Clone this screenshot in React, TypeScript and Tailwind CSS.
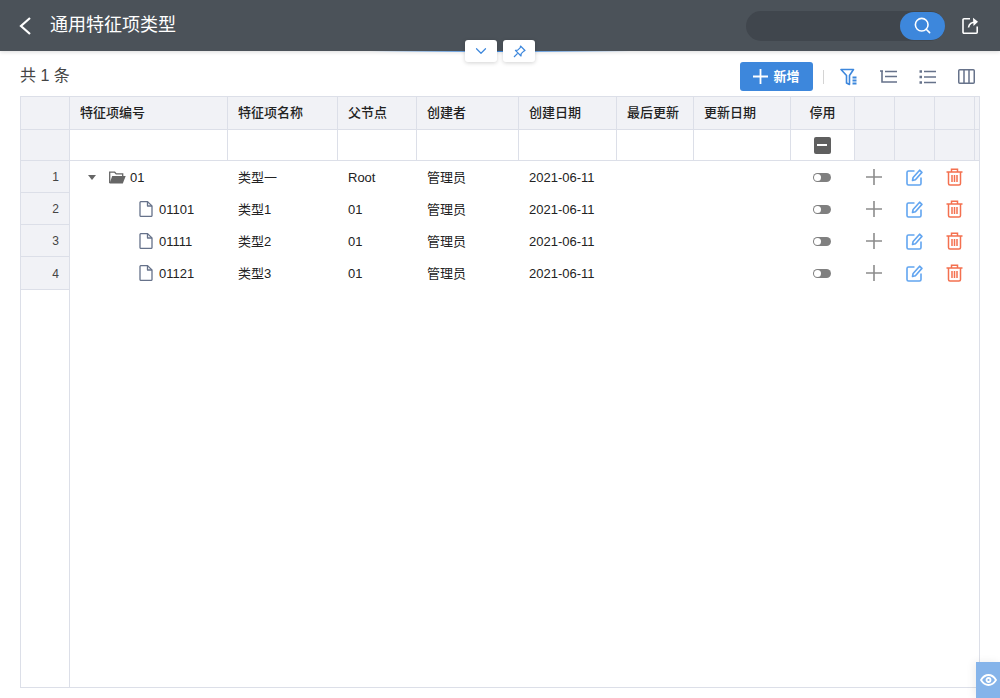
import { ChevronDown, Search } from 'lucide-react';

const widths = [49, 158, 110, 79, 102, 98, 77, 97, 64, 40, 40, 40, 4];
const gridCols = 'grid grid-cols-[49px_158px_110px_79px_102px_98px_77px_97px_64px_40px_40px_40px_4px]';

const headers = ['', '特征项编号', '特征项名称', '父节点', '创建者', '创建日期', '最后更新', '更新日期', '停用', '', '', '', ''];

const rows = [
  { no: 1, code: '01', name: '类型一', parent: 'Root', root: true },
  { no: 2, code: '01101', name: '类型1', parent: '01', root: false },
  { no: 3, code: '01111', name: '类型2', parent: '01', root: false },
  { no: 4, code: '01121', name: '类型3', parent: '01', root: false },
];

const FilterIcon = () => (
  <svg width="18" height="18" viewBox="0 0 18 18" fill="none" stroke="#3d87dc" strokeWidth="1.6">
    <path d="M1 1.5h12.5L9.5 7.5v9l-3-1.5V7.5z" strokeLinejoin="round" />
    <path d="M12.5 9.5h4M12.5 12.5h4M12.5 15.5h4" strokeWidth="1.8" />
  </svg>
);

const TreeListIcon = () => (
  <svg width="17" height="14" viewBox="0 0 17 14" fill="none" stroke="#66728a" strokeWidth="1.6">
    <path d="M0 1h3M5 1.5h12M2 1v11h3M5 6.5h12M5 12h12" />
  </svg>
);

const ListIcon = () => (
  <svg width="17" height="14" viewBox="0 0 17 14" fill="none" stroke="#66728a" strokeWidth="1.6">
    <path d="M5 1.5h12M5 7h12M5 12.5h12" />
    <path d="M0.5 1.5h2.5M0.5 7h2.5M0.5 12.5h2.5" strokeWidth="2.4" />
  </svg>
);

const ColumnsIcon = () => (
  <svg width="17" height="15" viewBox="0 0 17 15" fill="none" stroke="#66728a" strokeWidth="1.5">
    <rect x="0.75" y="0.75" width="15.5" height="13.5" rx="1" />
    <path d="M6 1v13M11 1v13" />
  </svg>
);

const ShareIcon = () => (
  <svg width="17" height="17" viewBox="0 0 17 17" fill="none" stroke="#fff" strokeWidth="1.6">
    <path d="M8 1.8H2a1 1 0 0 0-1 1v12.4a1 1 0 0 0 1 1h12.2a1 1 0 0 0 1-1V9.5" />
    <path d="M6.5 10.5C7 7 9.5 5 14 5" />
    <path d="M11 0.8L16 4.8L11.5 9z" fill="#fff" stroke="none" />
  </svg>
);

const PinIcon = () => (
  <svg width="13" height="13" viewBox="0 0 13 13" fill="none" stroke="#3d87dc" strokeWidth="1.2" strokeLinejoin="round">
    <path d="M7.5 1L12 5.5l-1.2.6-2.6 2.6-.2 2.3L2.4 5.4l2.3-.2 2.6-2.6z" />
    <path d="M4.6 8.4L1 12" />
  </svg>
);

const FolderOpenIcon = () => (
  <svg width="17" height="13" viewBox="0 0 17 13">
    <path d="M0.7 12V1.2h5l1.5 1.7h6.5V5" fill="none" stroke="#666" strokeWidth="1.3" />
    <path d="M3.2 5h13.5L13.8 12.6H0.5z" fill="#666" />
  </svg>
);

const FileIcon = () => (
  <svg width="14" height="16" viewBox="0 0 14 16" fill="none" stroke="#66728a" strokeWidth="1.3" strokeLinejoin="round">
    <path d="M1 1.6a1 1 0 0 1 1-1h6.5L13 5v9.4a1 1 0 0 1-1 1H2a1 1 0 0 1-1-1z" />
    <path d="M8.5 0.6V5H13" />
  </svg>
);

const EditIcon = () => (
  <svg width="17" height="17" viewBox="0 0 17 17" fill="none" stroke="#62a5f0" strokeWidth="1.6">
    <path d="M8.5 2H2.5a1.5 1.5 0 0 0-1.5 1.5v11A1.5 1.5 0 0 0 2.5 16h11a1.5 1.5 0 0 0 1.5-1.5V8.5" />
    <path d="M6.5 11.5l.6-3L13.6 1.2l2.3 2.2-6.5 7.4z" strokeLinejoin="round" />
  </svg>
);

const TrashIcon = () => (
  <svg width="17" height="18" viewBox="0 0 17 18" fill="none" stroke="#f4704f" strokeWidth="1.5">
    <path d="M0.5 4h16M5.5 4V1.2h6V4" />
    <path d="M2.5 4v11.5a1.5 1.5 0 0 0 1.5 1.5h9a1.5 1.5 0 0 0 1.5-1.5V4" />
    <path d="M6 7v7M8.5 7v7M11 7v7" />
  </svg>
);

const PlusIcon = () => (
  <svg width="16" height="16" viewBox="0 0 16 16" fill="none" stroke="#8c8c8c" strokeWidth="1.6">
    <path d="M0 8h16M8 0v16" />
  </svg>
);

const EyeIcon = () => (
  <svg width="17" height="12" viewBox="0 0 17 12" fill="none" stroke="#fff" strokeWidth="1.8">
    <path d="M1 6c2-3.300 4.500-5 7.500-5s5.500 1.700 7.500 5c-2 3.300-4.500 5-7.500 5S3 9.300 1 6z" />
    <circle cx="8.500" cy="6" r="2" />
  </svg>
);

export default function App() {
  return (
    <div className="relative w-[1000px] h-[698px] overflow-hidden bg-white font-['Liberation_Sans','Noto_Sans_CJK_SC',sans-serif]">
      {/* top bar */}
      <div className="h-[51px] bg-[#4b5259] flex items-center pl-[19px] pr-[21px] shadow-[0_1px_4px_rgba(0,0,0,0.15)]">
        <svg width="13" height="18" viewBox="0 0 13 18" fill="none" stroke="#fff" strokeWidth="2.200">
          <path d="M11 1L2 9l9 8" />
        </svg>
        <span className="ml-[18px] text-[18px] text-white">通用特征项类型</span>
        <div className="ml-auto flex items-center">
          <div className="w-[199px] h-[30px] mr-[17px] rounded-full bg-[#40464d] flex justify-end items-center">
            <div className="w-[45px] h-[28px] rounded-full bg-[#3d87dc] flex items-center justify-center">
              <Search size={19} strokeWidth={2} className="text-white" />
            </div>
          </div>
          <ShareIcon />
        </div>
      </div>

      {/* collapse and pin tabs */}
      <div className="absolute left-[370px] top-[51px] w-[260px] h-px bg-gradient-to-r from-transparent via-[#3d87dc] to-transparent" />
      <div className="absolute left-[465px] top-[40px] flex gap-[6px]">
        <div className="w-[32px] h-[22px] bg-white rounded-[3px] shadow-[0_1px_4px_rgba(0,0,0,0.18)] flex items-center justify-center">
          <ChevronDown size={18} strokeWidth={1.6} className="text-[#3d87dc]" />
        </div>
        <div className="w-[32px] h-[22px] bg-white rounded-[3px] shadow-[0_1px_4px_rgba(0,0,0,0.18)] flex items-center justify-center">
          <PinIcon />
        </div>
      </div>

      {/* toolbar */}
      <div className="h-[45px] pl-[20px] pr-[25px] pt-[6px] flex items-center">
        <span className="text-[16px] text-[#444] mb-[2px]">共 1 条</span>
        <div className="ml-auto flex items-center">
          <div className="w-[73px] h-[29px] rounded-[3px] bg-[#3d87dc] flex items-center justify-center gap-[5px] text-white">
            <svg width="15" height="15" viewBox="0 0 15 15" fill="none" stroke="#fff" strokeWidth="1.800">
              <path d="M0 7.500h15M7.500 0v15" />
            </svg>
            <span className="text-[13px] font-bold">新增</span>
          </div>
          <div className="ml-[10px] w-px h-[14px] bg-[#d4d4d4]" />
          <div className="ml-[16px] w-[18px] flex justify-center"><FilterIcon /></div>
          <div className="ml-[21px] w-[18px] flex justify-center"><TreeListIcon /></div>
          <div className="ml-[21px] w-[18px] flex justify-center"><ListIcon /></div>
          <div className="ml-[21px] w-[18px] flex justify-center"><ColumnsIcon /></div>
        </div>
      </div>

      {/* table */}
      <div className="relative mx-[20px] w-[960px] h-[592px] border border-[#dcdfe8] text-[13px] text-[#222]">
        <div className={`${gridCols} h-[33px] border-b border-[#dcdfe8] bg-[#f1f2f6]`}>
          {headers.map((h, i) => (
            <div
              key={i}
              className={`flex items-center font-medium whitespace-nowrap ${i === 8 ? 'justify-center' : 'px-[10px]'} ${i < 12 ? 'border-r border-[#dcdfe8]' : ''}`}
            >
              {h}
            </div>
          ))}
        </div>
        <div className={`${gridCols} h-[31px] border-b border-[#dcdfe8]`}>
          {widths.map((_, i) => (
            <div
              key={i}
              className={`flex items-center justify-center ${i < 12 ? 'border-r border-[#dcdfe8]' : ''} ${i === 0 || i > 8 ? 'bg-[#f1f2f6]' : ''}`}
            >
              {i === 8 && (
                <div className="w-[17px] h-[17px] mr-px rounded-[2px] bg-[#5f5f5f] flex items-center justify-center">
                  <div className="w-[10px] h-[2px] bg-white" />
                </div>
              )}
            </div>
          ))}
        </div>
        <div className="absolute left-[48px] top-[64px] bottom-0 w-px bg-[#dcdfe8]" />
        {rows.map((r) => (
          <div key={r.no} className={`${gridCols} grid-rows-[32px] h-[32px]`}>
            <div className={`flex items-center justify-end pr-[11px] pt-px bg-[#f1f2f6] text-[12px] text-[#444] border-b border-[#dcdfe8] ${r.no === 4 ? 'h-[33px]' : ''}`}>{r.no}</div>
            <div className="flex items-center">
              {r.root ? (
                <div className="flex items-center">
                  <svg className="ml-[18px]" width="8" height="5" viewBox="0 0 8 5"><path d="M0 0h8L4 5z" fill="#666" /></svg>
                  <div className="ml-[13px]"><FolderOpenIcon /></div>
                  <span className="ml-[4px] pt-px">01</span>
                </div>
              ) : (
                <div className="flex items-center">
                  <div className="ml-[69px]"><FileIcon /></div>
                  <span className="ml-[6px] pt-px">{r.code}</span>
                </div>
              )}
            </div>
            <div className="pl-[10px] pt-px flex items-center">{r.name}</div>
            <div className="pl-[10px] pt-px flex items-center">{r.parent}</div>
            <div className="pl-[10px] pt-px flex items-center">管理员</div>
            <div className="pl-[10px] pt-px flex items-center">2021-06-11</div>
            <div />
            <div />
            <div className="flex items-center justify-center pr-[2px]">
              <div className="w-[18px] h-[9px] rounded-full bg-[#808080] flex items-center pl-px">
                <div className="w-[7px] h-[7px] rounded-full bg-white" />
              </div>
            </div>
            <div className="flex items-center justify-center pr-[2px]"><PlusIcon /></div>
            <div className="flex items-center justify-center pr-[2px]"><EditIcon /></div>
            <div className="flex items-center justify-center pr-[2px]"><TrashIcon /></div>
            <div />
          </div>
        ))}
      </div>

      {/* eye tab */}
      <div className="absolute right-0 bottom-0 w-[24px] h-[36px] bg-[#85b4ea] flex items-center justify-center shadow-[-2px_0_8px_rgba(0,0,0,0.08)]">
        <EyeIcon />
      </div>
    </div>
  );
}
